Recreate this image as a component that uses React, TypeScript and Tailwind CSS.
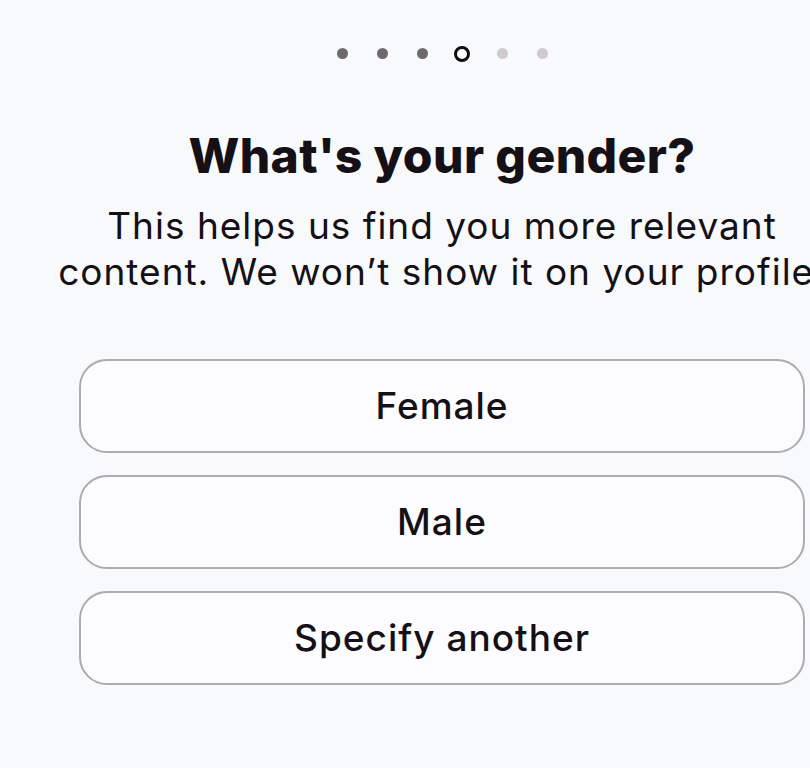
import React from 'react';

const options = ['Female', 'Male', 'Specify another'];

const StepDots: React.FC<{ total: number; current: number }> = ({ total, current }) => (
    <div className="flex justify-center items-center gap-[29px] pt-[48px]">
        {Array.from({ length: total }).map((_, i) =>
            i === current ? (
                <span key={i} className="w-[16px] h-[16px] -my-[2.5px] -mx-[2.5px] rounded-full border-[3px] border-[#0f0b10] bg-white" />
            ) : (
                <span
                    key={i}
                    className={
                        i < current
                            ? 'w-[11px] h-[11px] rounded-full bg-[#6e686f]'
                            : 'w-[11px] h-[11px] rounded-full bg-[#cfcbd1]'
                    }
                />
            )
        )}
    </div>
);

export default function App() {
    return (
        <div className="w-[810px] h-[768px] overflow-hidden bg-[#f8f9fb]" style={{ fontFamily: 'Inter, "Noto Sans", sans-serif' }}>
            <div className="w-[884px] text-[#141015]">
                <StepDots total={6} current={3} />
                <h1 className="mt-[68px] text-center text-[48px] leading-[58px] font-extrabold tracking-[0.4px] whitespace-nowrap">
                    What's your gender?
                </h1>
                <p className="mt-[18px] text-center text-[37px] leading-[46px] tracking-[1px] whitespace-nowrap">
                    This helps us find you more relevant
                    <br />
                    content. We won’t show it on your profile.
                </p>
                <div className="mt-[64px] px-[79px] flex flex-col gap-[22px]">
                    {options.map(option => (
                        <button
                            key={option}
                            className="h-[94px] w-full rounded-[28px] border-2 border-[#acabb0] bg-[#fcfcfe] text-[37px] font-medium text-[#141015] tracking-[1px]"
                        >
                            {option}
                        </button>
                    ))}
                </div>
            </div>
        </div>
    );
}
